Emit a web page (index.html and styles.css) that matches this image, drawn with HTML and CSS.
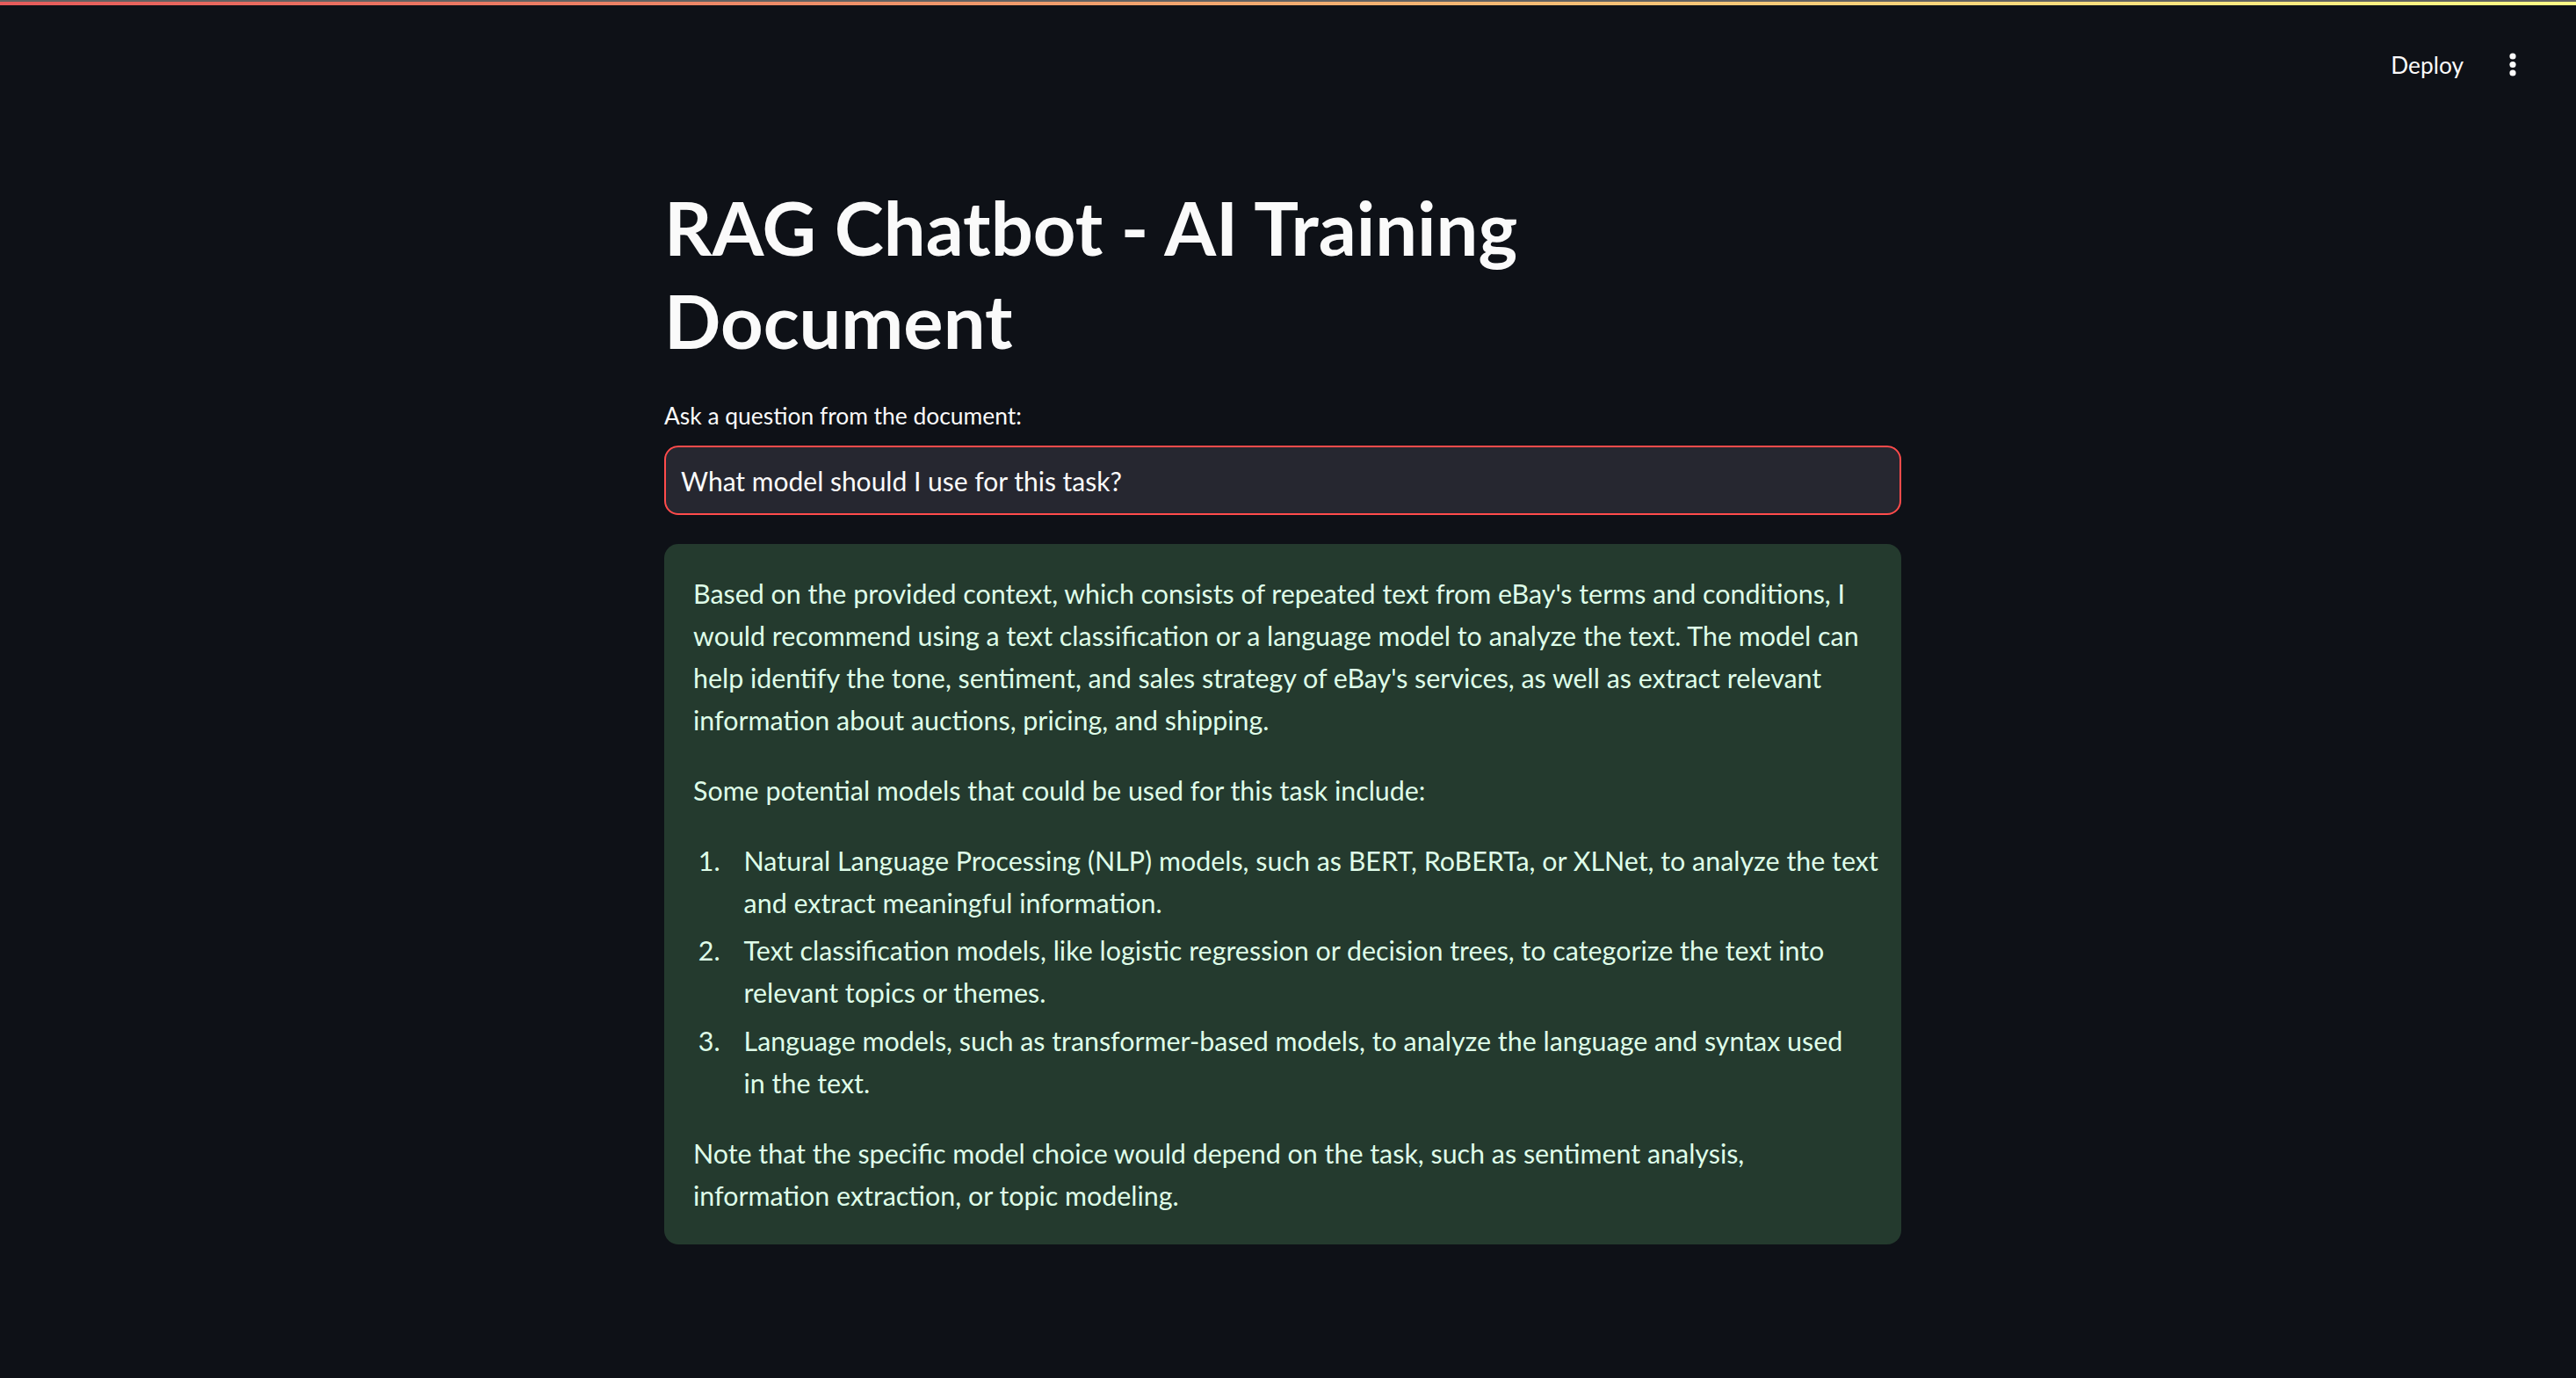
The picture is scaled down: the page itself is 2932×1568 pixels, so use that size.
FILE: index.html
```html
<!DOCTYPE html>
<html lang="en">
<head>
<meta charset="utf-8">
<title>RAG Chatbot - AI Training Document</title>
<link rel="stylesheet" href="styles.css">
</head>
<body>
<div class="decoration"></div>
<header class="header">
  <span class="deploy">Deploy</span>
  <span class="menu" aria-label="Main menu">
    <svg width="10" height="28" viewBox="0 0 10 28"><circle cx="5" cy="4" r="3.6" fill="#fafafa"/><circle cx="5" cy="13.5" r="3.6" fill="#fafafa"/><circle cx="5" cy="23" r="3.6" fill="#fafafa"/></svg>
  </span>
</header>
<main class="main">
  <div class="block">
    <h1 class="title">RAG Chatbot - AI Training Document</h1>
    <label class="label">Ask a question from the document:</label>
    <div class="input">What model should I use for this task?</div>
    <div class="alert">
      <p>Based on the provided context, which consists of repeated text from eBay's terms and conditions, I would recommend using a text classification or a language model to analyze the text. The model can help identify the tone, sentiment, and sales strategy of eBay's services, as well as extract relevant information about auctions, pricing, and shipping.</p>
      <p>Some potential models that could be used for this task include:</p>
      <ol>
        <li>Natural Language Processing (NLP) models, such as BERT, RoBERTa, or XLNet, to analyze the text and extract meaningful information.</li>
        <li>Text classification models, like logistic regression or decision trees, to categorize the text into relevant topics or themes.</li>
        <li>Language models, such as transformer-based models, to analyze the language and syntax used in&nbsp;the text.</li>
      </ol>
      <p>Note that the specific model choice would depend on the task, such as sentiment analysis, information extraction, or topic modeling.</p>
    </div>
  </div>
</main>
</body>
</html>
```
FILE: styles.css
```css
html, body {
  margin: 0;
  padding: 0;
  background: #0e1117;
  color: #fafafa;
  font-family: Lato, "Noto Sans", sans-serif;
}

.decoration {
  height: 4px;
  border-top: 2px solid #626262;
  background: linear-gradient(90deg, #e65b5b, #fffd86);
}

.header {
  display: flex;
  justify-content: flex-end;
  align-items: flex-start;
  height: 114px;
  padding: 48px 52px 0 0;
  box-sizing: border-box;
}

.deploy {
  font-size: 26.3px;
  line-height: 40px;
  height: 40px;
  margin-right: 36px;
  color: #fafafa;
}

.menu {
  width: 40px;
  height: 40px;
  display: flex;
  align-items: center;
  justify-content: center;
}

.main {
  display: flex;
  justify-content: center;
  padding-right: 12px;
}

.block {
  width: 1408px;
  padding-bottom: 120px;
}

.title {
  margin: 85px 0 0;
  font-size: 84.8px;
  line-height: 106px;
  font-weight: 700;
  color: #fafafa;
  width: 1100px;
}

.label {
  display: block;
  margin-top: 36px;
  font-size: 26.4px;
  line-height: 40px;
  color: #fafafa;
}

.input {
  margin-top: 14px;
  height: 79px;
  box-sizing: border-box;
  border: 2px solid #ff4b4b;
  border-radius: 16px;
  background: #262730;
  padding: 0 17px;
  display: flex;
  align-items: center;
  font-size: 30px;
  color: #fafafa;
}

.alert {
  margin-top: 33px;
  background: #243a2e;
  border-radius: 16px;
  padding: 32px 22px 32px 33px;
  color: #dffde9;
  font-size: 30.4px;
  line-height: 48px;
}

.alert p {
  margin: 0 0 32px;
}

.alert p:last-child {
  margin-bottom: 0;
}

.alert ol {
  margin: 0 0 32px;
  padding: 0;
}

.alert li {
  margin: 6.4px 0 6.4px 38.4px;
  padding-left: 19.2px;
}
```
